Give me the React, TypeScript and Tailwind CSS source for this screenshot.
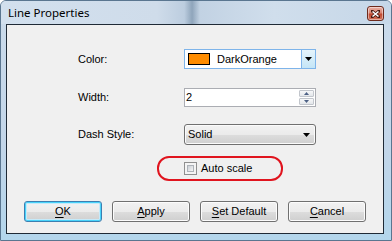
import React from "react";

const ui = { fontFamily: '"Liberation Sans", Arial, sans-serif' };

function Btn({ children, primary }: { children: React.ReactNode; primary?: boolean }) {
  return (
    <div
      className={
        "w-[78px] h-[21px] rounded-[3px] border flex items-center justify-center text-[11px] text-black bg-[linear-gradient(to_bottom,#f2f2f2_0%,#ebebeb_50%,#dddddd_51%,#cfcfcf_100%)] " +
        (primary
          ? "border-[#3c7fb1] shadow-[inset_0_0_0_1px_#48d3fa,inset_0_0_0_2px_#c5eafa]"
          : "border-[#707070] shadow-[inset_0_0_0_1px_#fcfcfc]")
      }
    >
      {children}
    </div>
  );
}

export default function App() {
  return (
    <div
      className="w-[392px] h-[241px] flex flex-col border border-[#5a7690] rounded-t-[6px] overflow-hidden bg-[linear-gradient(to_bottom,#cbdbeb_0%,#c3d6e9_60%,#b3d6ec_100%)]"
      style={ui}
    >
      {/* Title bar */}
      <div className="h-[23px] flex items-center justify-between pl-[7px] pr-[7px] relative bg-[linear-gradient(to_right,#d2e0ee_0%,#cfdcea_40%,#bccddf_47%,#8fa5bb_49%,#c2d2e3_51%,#d0deec_70%,#c6d7e8_100%)]">
        <span className="text-[11.5px] text-black" style={{ fontFamily: '"Noto Sans", "Open Sans", sans-serif' }}>
          Line Properties
        </span>
        <div className="w-[17px] h-[15px] mt-[2px] rounded-[3px] border border-[#6e2a1c] flex items-center justify-center bg-[linear-gradient(to_bottom,#eab0a4_0%,#d98573_45%,#c2482f_55%,#d0735b_100%)] shadow-[inset_0_0_0_1px_rgba(255,255,255,0.45)]">
          <svg width="9" height="8" viewBox="0 0 9 8">
            <path d="M1 1 L8 7 M8 1 L1 7" stroke="#4a1a10" strokeWidth="3" strokeLinecap="square" />
            <path d="M1.5 1.5 L7.5 6.5 M7.5 1.5 L1.5 6.5" stroke="#ffffff" strokeWidth="1.6" />
          </svg>
        </div>
      </div>

      {/* Client area */}
      <div className="ml-[5px] mr-[7px] h-[210px] border border-[#1f2a36] bg-[#f0f0f0] flex flex-col pt-[24px]">
        {/* Color row */}
        <div className="flex items-center h-[20px] pl-[71px]">
          <div className="w-[106px] text-[11px] text-black">Color:</div>
          <div className="w-[132px] h-[20px] border border-[#7eb4ea] bg-white flex items-center">
            <div className="w-[22px] h-[12px] ml-[3px] bg-[#ff8c00] border border-black" />
            <span className="ml-[7px] text-[11px] text-black flex-1">DarkOrange</span>
            <div className="w-[14px] h-full border-l border-[#7eb4ea] bg-[linear-gradient(to_bottom,#e5f4fc,#c4e5f6)] flex items-center justify-center">
              <svg width="7" height="4" viewBox="0 0 7 4">
                <path d="M0 0 H7 L3.5 4 Z" fill="#000" />
              </svg>
            </div>
          </div>
        </div>

        {/* Width row */}
        <div className="flex items-center h-[19px] pl-[71px] mt-[19px]">
          <div className="w-[106px] text-[11px] text-black">Width:</div>
          <div className="w-[132px] h-[19px] border border-[#abadb3] bg-white flex items-center">
            <span className="ml-[1px] text-[11px] text-black flex-1">2</span>
            <div className="w-[15px] h-[15px] mr-[1px] flex flex-col gap-[1px]">
              <div className="flex-1 rounded-[1px] border border-[#c2c6cc] bg-[linear-gradient(to_bottom,#f7f8f9,#e3e6ea)] flex items-center justify-center">
                <svg width="5" height="3" viewBox="0 0 5 3">
                  <path d="M0 3 H5 L2.5 0 Z" fill="#4d6185" />
                </svg>
              </div>
              <div className="flex-1 rounded-[1px] border border-[#c2c6cc] bg-[linear-gradient(to_bottom,#f7f8f9,#e3e6ea)] flex items-center justify-center">
                <svg width="5" height="3" viewBox="0 0 5 3">
                  <path d="M0 0 H5 L2.5 3 Z" fill="#4d6185" />
                </svg>
              </div>
            </div>
          </div>
        </div>

        {/* Dash style row */}
        <div className="flex items-center h-[21px] pl-[71px] mt-[17px]">
          <div className="w-[106px] text-[11px] text-black">Dash Style:</div>
          <div className="w-[132px] h-[21px] rounded-[3px] border border-[#707070] shadow-[inset_0_0_0_1px_#fbfbfb] bg-[linear-gradient(to_bottom,#f2f2f2_0%,#ebebeb_50%,#dddddd_51%,#cfcfcf_100%)] flex items-center">
            <span className="ml-[3px] text-[11px] text-black flex-1">Solid</span>
            <svg width="7" height="4" viewBox="0 0 7 4" className="mr-[5px]">
              <path d="M0 0 H7 L3.5 4 Z" fill="#000" />
            </svg>
          </div>
        </div>

        {/* Auto scale */}
        <div className="mt-[11px] ml-[150px] w-[126px] h-[25px] border-2 border-[#e0141e] rounded-[12px] flex items-center pl-[25px]">
          <div className="w-[13px] h-[13px] border border-[#8f8f8f] bg-[#f4f4f4] p-[2px]">
            <div className="w-full h-full border border-[#aeb3b9] bg-[linear-gradient(135deg,#cbcfd5,#f6f6f6)]" />
          </div>
          <span className="ml-[4px] text-[11px] text-black">Auto scale</span>
        </div>

        {/* Buttons */}
        <div className="flex gap-[10px] pl-[17px] mt-[20px]">
          <Btn primary>
            <span className="underline underline-offset-2">O</span>K
          </Btn>
          <Btn>
            <span className="underline underline-offset-2">A</span>pply
          </Btn>
          <Btn>
            <span className="underline underline-offset-2">S</span>et Default
          </Btn>
          <Btn>
            <span className="underline underline-offset-2">C</span>ancel
          </Btn>
        </div>
      </div>
    </div>
  );
}
